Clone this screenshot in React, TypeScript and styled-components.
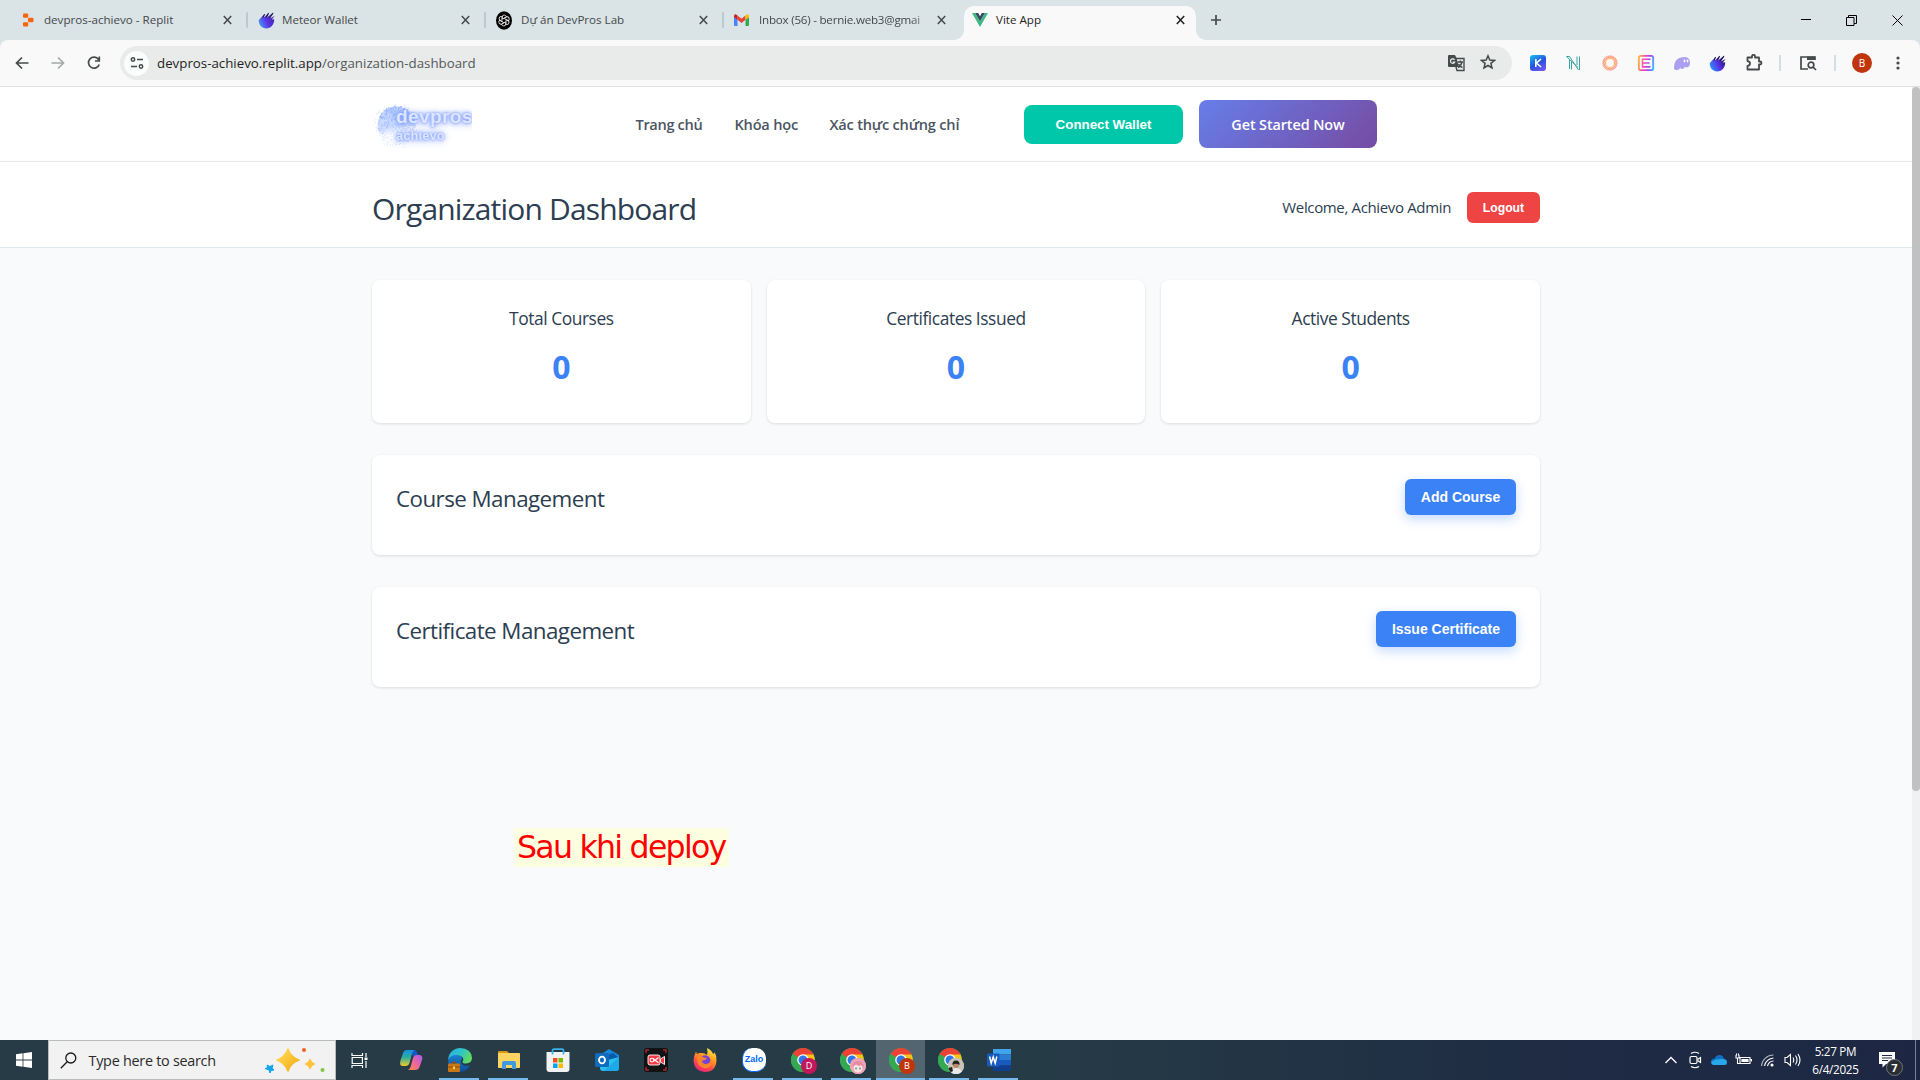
import React from 'react';
import styled, { createGlobalStyle, css } from 'styled-components';

const ui = `'Open Sans', 'Noto Sans', sans-serif`;
const arial = `'Liberation Sans', Arial, sans-serif`;

const Global = createGlobalStyle`
  * { box-sizing: border-box; }
  body { margin: 0; background: #f8fafc; font-family: ${ui}; overflow: hidden; }
  h1, h2, h3, p { margin: 0; font-weight: 400; }
  button { border: 0; padding: 0; font-family: inherit; }
  svg { display: block; flex: none; }
`;

const Screen = styled.div`
  width: 1920px;
  height: 1080px;
  display: flex;
  flex-direction: column;
  overflow: hidden;
`;

/* ---------- browser chrome ---------- */

const TabStrip = styled.div`
  height: 40px;
  flex: none;
  background: #dae3e6;
  display: flex;
  align-items: flex-start;
  padding-left: 10px;
`;

const Tab = styled.div<{ $active?: boolean; $w: number; $end?: number }>`
  position: relative;
  width: ${(p) => p.$w}px;
  height: ${(p) => (p.$active ? 34 : 28)}px;
  margin-top: 6px;
  display: flex;
  align-items: center;
  padding: ${(p) => (p.$active ? '0 11px 6px 8px' : `0 ${p.$end ?? 14}px 0 10px`)};
  color: ${(p) => (p.$active ? '#1f1f1f' : '#45494b')};
  background: ${(p) => (p.$active ? '#f9f9f9' : 'transparent')};
  border-radius: 10px 10px 0 0;
  ${(p) =>
    p.$active &&
    css`
      &::before, &::after {
        content: '';
        position: absolute;
        bottom: 0;
        width: 10px;
        height: 10px;
      }
      &::before { left: -10px; background: radial-gradient(circle at 0 0, transparent 9.5px, #f9f9f9 10.2px); }
      &::after { right: -10px; background: radial-gradient(circle at 100% 0, transparent 9.5px, #f9f9f9 10.2px); }
    `}
`;

const TabTitle = styled.span<{ $ml?: number; $ls?: number; $fade?: boolean }>`
  flex: 1;
  min-width: 0;
  margin-left: ${(p) => p.$ml ?? 9}px;
  margin-right: 6px;
  font-size: 11.6px;
  line-height: 18px;
  letter-spacing: ${(p) => p.$ls ?? 0}px;
  white-space: nowrap;
  ${(p) => p.$fade && css`mask-image: linear-gradient(90deg, #000 88%, rgba(0, 0, 0, 0.25));`}
`;

const TabDivider = styled.i`
  width: 2px;
  height: 16px;
  margin-top: 12px;
  background: #b9cbce;
  border-radius: 1px;
`;

const NewTab = styled.div`
  margin: 14px 0 0 14px;
`;

const WindowButtons = styled.div`
  margin-left: auto;
  height: 40px;
  display: flex;
  align-items: center;
  gap: 35px;
  padding-right: 17px;
`;

const Toolbar = styled.div`
  height: 47px;
  flex: none;
  display: flex;
  align-items: center;
  padding: 0 0 0 14px;
  background: #f9f9f9;
  border-bottom: 1px solid #dfe1e1;
  border-radius: 8px 8px 0 0;
`;

const ToolbarBack = styled.div`
  background: #dae3e6;
`;

const NavIcons = styled.div`
  display: flex;
  gap: 20px;
  margin-right: 18px;
`;

const AddressBar = styled.div`
  width: 1392px;
  flex: none;
  height: 34px;
  border-radius: 17px;
  background: #e8ebea;
  display: flex;
  align-items: center;
  padding: 0 16px 0 4px;
`;

const SiteInfo = styled.div`
  width: 25px;
  height: 25px;
  border-radius: 50%;
  background: #fbfcfc;
  display: grid;
  place-items: center;
`;

const Url = styled.span`
  margin-left: 8px;
  font-size: 13.3px;
  line-height: 20px;
  letter-spacing: 0;
  color: #1f1f1f;
  flex: 1;
  span { color: #55595a; }
`;

const AddressIcons = styled.div`
  display: flex;
  gap: 15px;
`;

const Extensions = styled.div`
  display: flex;
  align-items: center;
  gap: 18px;
  margin-left: 17px;
`;

const ToolDivider = styled.i<{ $l: number; $r: number }>`
  width: 2px;
  height: 16px;
  margin: 0 ${(p) => p.$r}px 0 ${(p) => p.$l}px;
  background: #d0dfe2;
`;

const Avatar = styled.div`
  width: 20px;
  height: 20px;
  border-radius: 50%;
  background: #bf360c;
  color: #fff;
  font-size: 10px;
  line-height: 20px;
  text-align: center;
  margin-right: 24px;
`;

/* ---------- page ---------- */

const Viewport = styled.div`
  height: 953px;
  flex: none;
  display: flex;
`;

const Page = styled.div`
  width: 1912px;
  background: #f8fafc;
`;

const Scrollbar = styled.div`
  width: 8px;
  background: #f1f1f1;
`;

const Thumb = styled.div`
  height: 704px;
  border-radius: 4px;
  background: #c1c1c1;
`;

const SiteHeader = styled.header`
  height: 75px;
  background: #fff;
  border-bottom: 1px solid #e5e7eb;
  display: flex;
  align-items: center;
  padding-left: 372px;
`;

const Logo = styled.div`
  width: 100px;
  height: 60px;
  display: flex;
  flex-direction: column;
  position: relative;
  overflow: hidden;
  padding: 13px 0 0 24px;
  font-family: ${arial};
  font-weight: 700;
  text-shadow: 0 0 2px #7d97ff, 0 0 4px #7b96ff, 0 1px 9px #93a9ff;
  color: #dce6ff;
  svg { position: absolute; left: 0; top: 0; }
`;

const LogoName = styled.span`
  position: relative;
  font-size: 19px;
  line-height: 20px;
  letter-spacing: 0.4px;
`;

const LogoSub = styled.span`
  position: relative;
  font-size: 12.5px;
  line-height: 16px;
  margin-top: 1px;
  letter-spacing: 0.3px;
`;

const Menu = styled.nav`
  display: flex;
  gap: 32px;
  margin-left: 163.5px;
`;

const MenuLink = styled.a<{ $w: number; $ls: number }>`
  width: ${(p) => p.$w}px;
  font-size: 14.6px;
  font-weight: 600;
  line-height: 24px;
  letter-spacing: ${(p) => p.$ls}px;
  white-space: nowrap;
  color: #4b5563;
`;

const ConnectButton = styled.button`
  width: 159px;
  height: 39px;
  margin-left: 62.5px;
  border-radius: 8px;
  background: #00c7a9;
  color: #fff;
  font: 700 13.33px ${arial};
`;

const StartButton = styled.button`
  width: 178px;
  height: 48px;
  margin-left: 16px;
  border-radius: 8px;
  background: linear-gradient(135deg, #667eea 0%, #764ba2 100%);
  color: #fff;
  font-size: 14.4px;
  font-weight: 600;
  letter-spacing: -0.1px;
`;

const TitleBar = styled.section`
  height: 86px;
  background: #fff;
  border-bottom: 1px solid #e2e8f0;
  padding: 0 372px;
  display: flex;
  align-items: center;
  justify-content: space-between;
  color: #2c3e50;
`;

const Title = styled.h1`
  font-size: 30px;
  line-height: 48px;
  letter-spacing: -0.83px;
  padding-top: 8px;
`;

const Account = styled.div`
  display: flex;
  align-items: center;
  gap: 16px;
  padding-top: 6px;
  font-size: 15px;
  letter-spacing: -0.35px;
`;

const Welcome = styled.span`
  margin-top: -2px;
`;

const LogoutButton = styled.button`
  width: 73px;
  height: 31px;
  border-radius: 6px;
  background: #ef4444;
  color: #fff;
  font: 700 12.2px ${arial};
`;

const Main = styled.main`
  padding: 32px 372px 0;
  display: flex;
  flex-direction: column;
  gap: 32px;
  color: #2c3e50;
`;

const Stats = styled.div`
  display: grid;
  grid-template-columns: repeat(3, 1fr);
  gap: 16px;
`;

const cardLook = css`
  background: #fff;
  border-radius: 8px;
  box-shadow: 0 1px 3px rgba(0, 0, 0, 0.12);
`;

const StatCard = styled.div`
  ${cardLook}
  height: 143px;
  padding-top: 24px;
  text-align: center;
`;

const StatLabel = styled.h3`
  font-size: 17.4px;
  line-height: 28px;
  letter-spacing: -0.45px;
`;

const StatValue = styled.p`
  margin-top: 11px;
  font-size: 32px;
  line-height: 48px;
  font-weight: 700;
  color: #3b82f6;
`;

const Panel = styled.section`
  ${cardLook}
  height: 100px;
  padding: 24px;
  display: flex;
  align-items: flex-start;
  justify-content: space-between;
`;

const PanelTitle = styled.h2`
  font-size: 22.4px;
  line-height: 39px;
  letter-spacing: -0.57px;
`;

const PanelButton = styled.button<{ $w: number }>`
  width: ${(p) => p.$w}px;
  height: 36px;
  border-radius: 6px;
  background: #3b82f6;
  color: #fff;
  font: 700 14px ${arial};
  box-shadow: 0 4px 12px rgba(59, 130, 246, 0.3);
`;

const Note = styled.div`
  align-self: flex-start;
  margin: 109px 0 0 142px;
  width: 215px;
  height: 39px;
  background: #fdfee0;
  color: #f00;
  font: 31.6px/39px 'DejaVu Sans', Verdana, sans-serif;
  letter-spacing: -1.75px;
  padding-left: 3px;
  white-space: nowrap;
`;

/* ---------- taskbar ---------- */

const Taskbar = styled.footer`
  height: 40px;
  flex: none;
  display: flex;
  align-items: stretch;
  background: linear-gradient(90deg, #263b45 0%, #253b46 55%, #1f2c44 80%, #1d2743 100%);
`;

const Start = styled.div`
  width: 48px;
  display: grid;
  place-items: center;
`;

const Search = styled.div`
  width: 288px;
  background: #f2f2f2;
  border: 1px solid #b9bcbd;
  display: flex;
  align-items: center;
  padding: 0 9px 0 11px;
  color: #2b2b2b;
  font-size: 14.4px;
`;

const SearchText = styled.span`
  flex: 1;
  margin-left: 11.5px;
  letter-spacing: -0.27px;
`;

const TaskItem = styled.div<{ $w?: number; $active?: boolean; $open?: boolean }>`
  width: ${(p) => p.$w ?? 49}px;
  display: grid;
  place-items: center;
  position: relative;
  background: ${(p) => (p.$active ? '#53656e' : 'transparent')};
  &::after {
    content: '';
    position: absolute;
    bottom: 0;
    height: 2px;
    left: ${(p) => (p.$active ? 0 : 4)}px;
    right: ${(p) => (p.$active ? 0 : 5)}px;
    background: ${(p) => (p.$open ? '#76b9ed' : 'transparent')};
  }
`;

const TaskView = styled.div`
  width: 50px;
  display: flex;
  align-items: center;
  padding-left: 15px;
`;

const ProfileBadge = styled.span<{ $c: string }>`
  position: absolute;
  left: 23px;
  top: 18px;
  width: 16px;
  height: 16px;
  border-radius: 50%;
  background: ${(p) => p.$c};
  color: #fff;
  font-size: 9px;
  line-height: 16px;
  text-align: center;
  overflow: hidden;
`;

const ZaloMark = styled.span`
  width: 24px;
  height: 24px;
  border-radius: 10px;
  background: #fff;
  border: 1px solid #0068ff;
  border-width: 0 0 1px 1px;
  color: #0068ff;
  font: 700 9px/23px ${arial};
  text-align: center;
`;

const Tray = styled.div`
  margin-left: auto;
  display: flex;
  align-items: center;
  gap: 8px;
  color: #fff;
`;

const Clock = styled.div`
  width: 58px;
  margin-left: -2.5px;
  text-align: center;
  font-size: 11.7px;
  line-height: 18px;
  letter-spacing: -0.3px;
  white-space: nowrap;
`;

const Notifications = styled.div`
  width: 28px;
  height: 40px;
  margin-left: 6.5px;
  padding-top: 12px;
  position: relative;
`;

const Count = styled.span`
  position: absolute;
  left: 7px;
  top: 18.5px;
  width: 17px;
  height: 17px;
  border-radius: 50%;
  background: #2a2e33;
  border: 1px solid #74787d;
  font: 700 11px/15px ${ui};
  text-align: center;
`;

const ShowDesktop = styled.i`
  width: 5px;
  height: 40px;
  border-left: 1px solid #7b8494;
`;

/* ---------- icons ---------- */

const CloseX = ({ c = '#44494b' }: { c?: string }) => (
  <svg width="9" height="10" viewBox="0 0 9 10" stroke={c} strokeWidth="1.5"><path d="M.8 1l7.400 8M8.200 1L.8 9" /></svg>
);

const Replit = () => (
  <svg width="16" height="16" viewBox="0 0 16 16" fill="#f8640c">
    <rect x="3" y="1.500" width="5.200" height="4.300" rx="1" /><rect x="8" y="5.800" width="5.500" height="4.400" rx="1" /><rect x="3" y="10.200" width="5.200" height="4.300" rx="1" />
  </svg>
);

const Meteor = ({ dark }: { dark?: boolean }) => (
  <svg width="17" height="17" viewBox="0 0 17 17">
    <defs>
      <linearGradient id={dark ? 'mtD' : 'mtL'} x1="0" y1="0.7" x2="1" y2="0.2">
        <stop offset="0" stopColor={dark ? '#229bff' : '#4299f5'} /><stop offset=".45" stopColor="#5a35e8" /><stop offset="1" stopColor={dark ? '#1c0f6c' : '#3d2297'} />
      </linearGradient>
    </defs>
    <path fill={`url(#${dark ? 'mtD' : 'mtL'})`} d="M.8 8 6.800 1.800 5 6.200 11 .6 8.600 5.800 15.400.6 11.600 6.400 16.600 4 13.800 7.400 16.200 7.200C16.200 12.600 12.800 16.500 8.300 16.500 3.800 16.500.4 12.800.8 8Z" />
    <path stroke="#1c1650" strokeWidth="1.100" d="M6.600 2.300 4.800 5.800M10.600 1.200 8.300 5.600M15 1.100 11.300 6.200" />
  </svg>
);

const OpenAi = () => (
  <svg width="16" height="19" viewBox="0 0 16 19">
    <ellipse cx="8" cy="9.500" rx="8" ry="9.300" fill="#000" />
    <g fill="none" stroke="#e8e8e8" strokeWidth=".9">
      {[0, 60, 120, 180, 240, 300].map((a) => (
        <path key={a} transform={`rotate(${a} 8 9.500)`} d="M6 9.500V6.200Q6.200 4 8.300 4 10.200 4.200 10.500 6L8 7.600" />
      ))}
    </g>
  </svg>
);

const Gmail = () => (
  <svg width="15" height="12" viewBox="0 0 15 12">
    <path fill="#4285f4" d="M0 3l3.500 2.500V12H1.200Q0 12 0 11z" /><path fill="#34a853" d="M15 3l-3.500 2.500V12h2.300Q15 12 15 11z" />
    <path fill="#ea4335" d="M3.500 1.500 7.500 4.700l4-3.200v4.200l-4 3.200-4-3.200z" /><path fill="#c5221f" d="M0 2Q.2 0 2 0.400L3.500 1.500v4.200L0 3.300z" />
    <path fill="#fbbc04" d="M15 2Q14.800 0 13 .4L11.500 1.500v4.200L15 3.300z" />
  </svg>
);

const Vue = () => (
  <svg width="16" height="14" viewBox="0 0 16 14"><path fill="#41b883" d="M0 0h3.200L8 8.300 12.800 0H16L8 14z" /><path fill="#35495e" d="M3.200 0h3L8 3.200 9.800 0h3L8 8.300z" /></svg>
);

const stroke = { fill: 'none', stroke: '#454a4b', strokeWidth: 1.7 } as const;

const Chrome = () => (
  <svg width="24" height="24" viewBox="0 0 24 24">
    <circle cx="12" cy="12" r="12" fill="#34a853" />
    <path fill="#ea4335" d="M12 12 1.600 6A12 12 0 0 1 22.400 6L22.400 7H12z" />
    <path fill="#fbc116" d="M22.400 6.400A12 12 0 0 1 12 24L17 14.500 12 6.400z" />
    <path fill="#34a853" d="M1.600 6A12 12 0 0 0 12 24L16.800 15 12 12 7 14.500z" />
    <circle cx="12" cy="12" r="5.800" fill="#fff" /><circle cx="12" cy="12" r="4.500" fill="#2f78e6" />
  </svg>
);

const Portrait = ({ pink }: { pink?: boolean }) => (
  <svg width="16" height="16" viewBox="0 0 16 16">
    <rect width="16" height="16" fill={pink ? '#eea3b6' : '#c9c2b7'} />
    {pink ? (
      <><ellipse cx="8" cy="10" rx="4.500" ry="4.500" fill="#fbe3dc" /><path fill="#e58aa3" d="M2 9Q3 3 8 3t6 6L11 7 9 8 6 6.500z" /><circle cx="6" cy="10.500" r="1" fill="#4ba3b5" /><circle cx="10" cy="10.500" r="1" fill="#4ba3b5" /></>
    ) : (
      <><path fill="#e9e9ea" d="M1 16Q3 10 8 10t7 6z" /><circle cx="8" cy="7" r="3" fill="#b88867" /><path fill="#272120" d="M4.500 7Q4 2.500 8 2.500T11.500 7Q8 4.500 4.500 7zM0 10l4-1 1 4-4 2z" /></>
    )}
  </svg>
);

const GlobeDots = () => {
  const dots: React.ReactElement[] = [];
  let seed = 11;
  const rnd = () => (seed = (seed * 16807) % 2147483647) / 2147483647;
  for (let i = 0; i < 900; i++) {
    const a = rnd() * Math.PI * 2;
    const r = Math.sqrt(rnd()) * 19;
    const x = 24 + Math.cos(a) * r;
    const y = 31 + Math.sin(a) * r * 1.05;
    const fade = Math.max(0.12, 0.95 - (y - 12) / 38);
    dots.push(<rect key={i} x={x} y={y} width="1" height="1" fill={i % 3 ? '#94b4ff' : '#dbe7ff'} opacity={fade} />);
  }
  for (let i = 0; i < 60; i++) {
    const a = rnd() * Math.PI * 2;
    const r = 18 + rnd() * 5;
    dots.push(<rect key={`o${i}`} x={24 + Math.cos(a) * r} y={31 + Math.sin(a) * r} width="1" height="1" fill="#c3d1ff" opacity=".6" />);
  }
  return (
    <svg width="100" height="60">
      <defs><linearGradient id="globe" x1="0.300" y1="0" x2="0.500" y2="1"><stop offset="0" stopColor="#a6c2ff" stopOpacity=".9" /><stop offset=".55" stopColor="#bdd0ff" stopOpacity=".7" /><stop offset=".8" stopColor="#fff" stopOpacity="0" /></linearGradient></defs>
      <circle cx="24" cy="31" r="18.500" fill="url(#globe)" />{dots}
    </svg>
  );
};

const Sparkles = () => (
  <svg width="62" height="26" viewBox="0 0 62 26">
    <defs><linearGradient id="gold" x1="0" y1="0" x2="1" y2="1"><stop offset="0" stopColor="#ffe05c" /><stop offset="1" stopColor="#f3a712" /></linearGradient></defs>
    <path fill="url(#gold)" stroke="url(#gold)" strokeWidth="1.500" strokeLinejoin="round" d="M24 2Q26.500 10 35 13 26.500 16 24 24 21 16 13 13 21 10 24 2z" />
    <path fill="#fbc338" stroke="#fbc338" strokeLinejoin="round" d="M46 12Q47 16 51 17 47 18 46 22 45 18 41 17 45 16 46 12z" />
    <path fill="#10a4ee" stroke="#10a4ee" strokeLinejoin="round" d="M3 18l3 1.500L9 18 8 21l2 2-3 .5L6 26l-1-3-4-1.500 3-1z" />
    <circle cx="40" cy="3" r="2" fill="#f25b22" /><circle cx="58.500" cy="23" r="2" fill="#84c341" />
  </svg>
);

const Copilot = () => (
  <svg width="24" height="24" viewBox="0 0 24 24">
    <defs>
      <linearGradient id="cpA" x1="0" y1="0" x2="0" y2="1"><stop offset="0" stopColor="#1a8fe0" /><stop offset=".45" stopColor="#2aaea0" /><stop offset="1" stopColor="#f3c82b" /></linearGradient>
      <linearGradient id="cpB" x1="1" y1="0" x2="0" y2="1"><stop offset="0" stopColor="#a35df0" /><stop offset=".5" stopColor="#f0649d" /><stop offset="1" stopColor="#fb8b42" /></linearGradient>
    </defs>
    <path fill="#1557c5" d="M11 2h4.500Q17.500 2 18.500 5L19.500 8H14z" />
    <path fill="url(#cpA)" d="M8 2h7.500Q13.500 3 13 5.500L10.500 15Q9.500 18 6.500 18H4Q0 18 1.500 12.500L4 5Q5 2 8 2z" />
    <path fill="url(#cpB)" d="M16 22H9Q11 21 11.500 19L14 10Q15 7 18 7h2.500Q24.500 7.500 22.800 12.500L20.500 19Q19.500 22 16 22z" />
  </svg>
);

const EdgeWork = () => (
  <svg width="24" height="24" viewBox="0 0 24 24">
    <defs>
      <linearGradient id="edA" x1="0" y1="0" x2="1" y2="0.400"><stop offset="0" stopColor="#2aa9e8" /><stop offset=".6" stopColor="#30c7c3" /><stop offset="1" stopColor="#60da62" /></linearGradient>
      <linearGradient id="edB" x1="0" y1="0" x2="0" y2="1"><stop offset="0" stopColor="#1a82d2" /><stop offset="1" stopColor="#0b4c99" /></linearGradient>
    </defs>
    <path fill="url(#edB)" d="M.2 13Q1 6 8 6.500q6 0 6 4.500-2 2-1 4 2 4 9 2.500Q18.500 24 12 24 1 24 .2 13z" />
    <path fill="url(#edA)" d="M.2 12A12 12 0 0 1 12 0Q23.500.5 24 10q0 5-6 5.500-4 0-3.500-2Q16 12 15 10 13 7 8.500 7 2.500 7 .2 12z" />
    <rect x="0" y="15.500" width="12" height="8.500" rx="1" fill="#c97814" /><path fill="#8f4d08" d="M4 13.800h4v1.700H4zM0 18.500h12v1H0z" /><rect x="5" y="18.500" width="2" height="2.500" fill="#ffd34d" />
  </svg>
);

const Explorer = () => (
  <svg width="22" height="20" viewBox="0 0 22 20"><path fill="#d79a16" d="M0 2Q0 1 1 1h8l2 2v4H0z" /><rect y="3" width="22" height="15" rx=".8" fill="#fcd462" /><path fill="#3f9bdc" d="M4 19v-6q0-2 2-2h10q2 0 2 2v6h-4v-4H8v4z" /></svg>
);

const Store = () => (
  <svg width="24" height="24" viewBox="0 0 24 24"><path fill="none" stroke="#36b3ea" strokeWidth="1.700" d="M6.500 6V2.500Q6.500 1.200 8 1.200h8q1.500 0 1.500 1.300V6" /><path fill="#f1f2f3" d="M.5 4h23v17q0 3-3 3h-17q-3 0-3-3z" /><path fill="none" stroke="#36b3ea" strokeWidth="1.700" d="M6.500 4v2.500M17.500 4v2.500" /><path fill="#f25022" d="M7 10h4.500v4.500H7z" /><path fill="#7fba00" d="M12.500 10H17v4.500h-4.500z" /><path fill="#00a4ef" d="M7 15.500h4.500V20H7z" /><path fill="#ffb900" d="M12.500 15.500H17V20h-4.500z" /></svg>
);

const Outlook = () => (
  <svg width="24" height="24" viewBox="0 0 24 24"><path fill="#1687d9" d="M5 7 14 1l10 6v5H5z" /><path fill="#0d57a8" d="M10 8 18 5l6 5-6 6z" /><path fill="#29c1f0" d="M5 14l19-5v11q0 3-3 3H8q-3 0-3-3z" /><path fill="#1a9fe4" d="M24 9v11q0 3-3 3H9z" opacity=".7" /><rect y="5" width="14" height="14" rx="1.500" fill="#0f6cbd" /><ellipse cx="7" cy="12" rx="3" ry="3.400" fill="none" stroke="#fff" strokeWidth="1.800" /></svg>
);

const Recorder = () => (
  <svg width="24" height="24" viewBox="0 0 24 24"><rect width="24" height="24" rx="3" fill="#111214" /><path fill="none" stroke="#b0272d" strokeWidth="1.400" d="M2 5V2h3M19 2h3v3M22 19v3h-3M5 22H2v-3" /><rect x="4" y="7" width="12" height="10" rx="2" fill="#f03c45" stroke="#fff" strokeWidth=".9" /><path fill="#f03c45" stroke="#fff" strokeWidth=".9" d="M16.500 11 20.500 8.500v8L16.500 14z" /><path fill="none" stroke="#fff" strokeWidth="1.100" d="M14.500 9.500 10 13.200M14.500 14.800 9.500 11" /><circle cx="8" cy="12.100" r="1.900" fill="none" stroke="#fff" strokeWidth="1.100" /></svg>
);

const Firefox = () => (
  <svg width="24" height="24" viewBox="0 0 24 24">
    <defs><linearGradient id="ff" x1=".8" y1="0" x2=".3" y2="1"><stop offset="0" stopColor="#fff14a" /><stop offset=".4" stopColor="#ff9a1f" /><stop offset=".75" stopColor="#ff4253" /><stop offset="1" stopColor="#e8257a" /></linearGradient></defs>
    <path fill="url(#ff)" d="M14 0q5 2.500 6 6 2-.5 1.500-2Q24 8 23.500 13 22.500 24 12 24 1.500 23.500.5 13 .5 8 3 3.500L4 6Q6 4.500 8 5 11 4.500 14 7 15 4 14 0z" />
    <circle cx="12" cy="12.500" r="5.300" fill="#7442d8" /><path fill="#ff8a22" d="M4 8.500Q8 7 11 9.500L14 10Q12 13 9.500 12.500 8 14.500 12 16q5 0 6-4 1.500 8-6 8.500Q3 19 4 8.500z" opacity=".9" />
  </svg>
);

const Word = () => (
  <svg width="24" height="22" viewBox="0 0 24 22"><path fill="#41a5ee" d="M6 0h18v5.500H6z" /><path fill="#2b7cd3" d="M6 5.500h18V11H6z" /><path fill="#185abd" d="M6 11h18v5.500H6z" /><path fill="#103f91" d="M6 16.500h18V21q0 1-1 1H7q-1 0-1-1z" /><rect y="4.500" width="12.500" height="13" rx="1" fill="#185abd" /><path fill="none" stroke="#fff" strokeWidth="1.500" d="M2.600 7.500 4.200 14.300 6.200 8l2 6.300 1.600-6.800" /></svg>
);

export default function App() {
  return (
    <>
      <Global />
      <Screen>
        <TabStrip>
          <Tab $w={236}><Replit /><TabTitle $ml={8}>devpros-achievo - Replit</TabTitle><CloseX /></Tab>
          <TabDivider />
          <Tab $w={236}><Meteor /><TabTitle $ml={7}>Meteor Wallet</TabTitle><CloseX /></Tab>
          <TabDivider />
          <Tab $w={236}><OpenAi /><TabTitle>Dự án DevPros Lab</TabTitle><CloseX /></Tab>
          <TabDivider />
          <Tab $w={240} $end={18}><Gmail /><TabTitle $fade $ml={10} $ls={-0.22}>Inbox (56) - bernie.web3@gmai</TabTitle><CloseX /></Tab>
          <Tab $w={232} $active><Vue /><TabTitle $ml={8}>Vite App</TabTitle><CloseX c="#1f1f1f" /></Tab>
          <NewTab><svg width="12" height="12" viewBox="0 0 12 12" {...stroke}><path d="M6 1v10M1 6h10" /></svg></NewTab>
          <WindowButtons>
            <svg width="10" height="10" stroke="#000"><path d="M0 4.500h10" /></svg>
            <svg width="11" height="11" fill="none" stroke="#000"><path d="M.5 2.500h7.500v8H.5zM2.500 2.500V.5h8v8H8" /></svg>
            <svg width="11" height="11" stroke="#000"><path d="M.5.5l10 10M10.500.5l-10 10" /></svg>
          </WindowButtons>
        </TabStrip>

        <ToolbarBack>
          <Toolbar>
            <NavIcons>
              <svg width="16" height="16" viewBox="0 0 16 16" {...stroke}><path d="M14.500 8H2.500M8 2.500 2.500 8 8 13.500" /></svg>
              <svg width="16" height="16" viewBox="0 0 16 16" {...stroke} stroke="#a5a9aa"><path d="M1.500 8h12M8 2.500 13.500 8 8 13.500" /></svg>
              <svg width="16" height="16" viewBox="0 0 16 16" {...stroke}><path d="M13.200 9.500A5.500 5.500 0 1 1 12.500 4.500M13.300 1.500V6H9" /></svg>
            </NavIcons>
            <AddressBar>
              <SiteInfo>
                <svg width="14" height="14" viewBox="0 0 14 14" {...stroke} strokeWidth="1.500"><circle cx="3" cy="3.500" r="1.700" /><circle cx="11" cy="10.500" r="1.700" /><path d="M7 3.500h6M1 10.500h6" /></svg>
              </SiteInfo>
              <Url>devpros-achievo.replit.app<span>/organization-dashboard</span></Url>
              <AddressIcons>
                <svg width="17" height="18" viewBox="0 0 17 18"><path fill="#454a4b" d="M1 1h6l1.500 3L11 13H1Q0 13 0 12V2Q0 1 1 1z" /><path fill="none" stroke="#f0f2f2" strokeWidth="1.200" d="M6.500 5.800A2.200 2.200 0 1 0 6.700 8H4.800" /><path fill="none" stroke="#454a4b" strokeWidth="1.400" d="M8 4.500h8v12H9L8 13M9.500 8h5.500M12.200 6.500V8M14 8q-1 4-4 5.500M10.500 10q1 2.500 4 3.500" /></svg>
                <svg width="16" height="16" viewBox="0 0 16 16" {...stroke} strokeWidth="1.500"><path d="M8 1.800 9.800 6l4.700.4-3.600 3 1.100 4.600L8 11.500 4 14l1.100-4.600-3.600-3L6.200 6z" /></svg>
              </AddressIcons>
            </AddressBar>
            <Extensions>
              <svg width="18" height="18" viewBox="0 0 18 18"><defs><linearGradient id="kk" x1="0" y1="0" x2=".6" y2="1"><stop offset="0" stopColor="#14c2f0" /><stop offset=".6" stopColor="#2453e0" /><stop offset="1" stopColor="#6a55ee" /></linearGradient></defs><rect x="1" y="1" width="16" height="16" rx="3" fill="url(#kk)" /><path fill="none" stroke="#fff" strokeWidth="1.600" d="M6.800 5v8M12 5 7.500 9 12 13" /></svg>
              <svg width="18" height="18" viewBox="0 0 18 18" fill="none" stroke="#3aa6a4" strokeWidth="1"><path d="M1.500 2.500h3L13.500 16M1.500 2.500 13 13.500M4.500 5.500V15M6.500 7.500v8M12 2.500V11M14.500 2.500V16" /></svg>
              <svg width="18" height="18" viewBox="0 0 18 18" fill="none"><circle cx="9" cy="9" r="7.200" stroke="#ffb3a7" /><ellipse cx="9" cy="9" rx="7" ry="5.600" stroke="#ff9a9e" transform="rotate(45 9 9)" /><ellipse cx="9" cy="9" rx="7" ry="5.600" stroke="#fba26e" transform="rotate(-45 9 9)" /><circle cx="9" cy="9" r="4.500" stroke="#ffb070" strokeWidth="1.200" /></svg>
              <svg width="18" height="18" viewBox="0 0 18 18" fill="none"><defs><linearGradient id="ee" gradientUnits="userSpaceOnUse" x1="1" y1="8" x2="17" y2="11"><stop offset="0" stopColor="#ffb52e" /><stop offset=".35" stopColor="#fa4bb0" /><stop offset=".7" stopColor="#a544f5" /><stop offset="1" stopColor="#32b7ff" /></linearGradient></defs><rect x="1.800" y="1.800" width="14.400" height="14.400" rx="2" stroke="url(#ee)" strokeWidth="1.800" /><path stroke="url(#ee)" strokeWidth="1.600" d="M13.500 5.200H5.500v7.700h8M6 9.050h6.500" /></svg>
              <svg width="18" height="18" viewBox="0 0 18 18"><path fill="#ab9ff2" d="M1 14Q1 3 12 3q5 .5 5 6 0 4-3.500 4.500-1 0-1.500-1-1 2.500-3 2.500-1.500 0-1.500-1.500Q6 16 4 16 1 16 1 14z" /><ellipse cx="11.500" cy="7" rx=".9" ry="1.400" fill="#fff" /><ellipse cx="14.500" cy="7" rx=".9" ry="1.400" fill="#fff" /></svg>
              <Meteor dark />
              <svg width="19" height="18" viewBox="-1 0 19 18" {...stroke} strokeWidth="1.800"><path strokeLinejoin="round" d="M2.500 3.500h4.500V2.300a1.500 1.500 0 0 1 3 0V3.500h4V7.500h1a1.500 1.500 0 0 1 0 3h-1V15.500H2.500V12Q5 11.500 5 9.500T2.500 7z" /></svg>
            </Extensions>
            <ToolDivider $l={16} $r={18} />
            <svg width="18" height="16" viewBox="0 0 18 16"><path {...stroke} d="M9 14H2V2h14v3" /><path fill="#454a4b" d="M8 1.500h8V5H8z" /><circle cx="12" cy="10" r="2.800" {...stroke} /><path {...stroke} d="M14 12l3 3" /></svg>
            <ToolDivider $l={17} $r={16} />
            <Avatar>B</Avatar>
            <svg width="4" height="16" fill="#454a4b"><circle cx="2" cy="3" r="1.600" /><circle cx="2" cy="8" r="1.600" /><circle cx="2" cy="13" r="1.600" /></svg>
          </Toolbar>
        </ToolbarBack>

        <Viewport>
          <Page>
            <SiteHeader>
              <Logo><GlobeDots /><LogoName>devpros</LogoName><LogoSub>achievo</LogoSub></Logo>
              <Menu>
                <MenuLink $w={67} $ls={-0.35}>Trang chủ</MenuLink>
                <MenuLink $w={63} $ls={-0.22}>Khóa học</MenuLink>
                <MenuLink $w={132} $ls={-0.22}>Xác thực chứng chỉ</MenuLink>
              </Menu>
              <ConnectButton>Connect Wallet</ConnectButton>
              <StartButton>Get Started Now</StartButton>
            </SiteHeader>
            <TitleBar>
              <Title>Organization Dashboard</Title>
              <Account><Welcome>Welcome, Achievo Admin</Welcome><LogoutButton>Logout</LogoutButton></Account>
            </TitleBar>
            <Main>
              <Stats>
                {['Total Courses', 'Certificates Issued', 'Active Students'].map((label) => (
                  <StatCard key={label}><StatLabel>{label}</StatLabel><StatValue>0</StatValue></StatCard>
                ))}
              </Stats>
              <Panel><PanelTitle>Course Management</PanelTitle><PanelButton $w={111}>Add Course</PanelButton></Panel>
              <Panel><PanelTitle>Certificate Management</PanelTitle><PanelButton $w={140}>Issue Certificate</PanelButton></Panel>
              <Note>Sau khi deploy</Note>
            </Main>
          </Page>
          <Scrollbar><Thumb /></Scrollbar>
        </Viewport>

        <Taskbar>
          <Start><svg width="16" height="16" viewBox="0 0 16 16" fill="#fff"><path d="M0 2.200 6.600 1.300V7.600H0zM7.400 1.200 16 0v7.600H7.400zM0 8.400h6.600v6.300L0 13.800zM7.400 8.400H16V16l-8.600-1.200z" /></svg></Start>
          <Search>
            <svg width="17" height="17" viewBox="0 0 17 17" fill="none" stroke="#1a1a1a" strokeWidth="1.300"><circle cx="10.800" cy="6" r="5" /><path d="M7.200 9.700.8 16.200" /></svg>
            <SearchText>Type here to search</SearchText>
            <Sparkles />
          </Search>
          <TaskView><svg width="17" height="17" viewBox="0 0 17 17" fill="none" stroke="#fff" strokeWidth="1.200"><path d="M1 1v2.500h10.500V1M1 16v-2.500h10.500V16M1.200 5.500h10.200v6H1.200zM15 1v4M15 9v7" /><path strokeWidth="3" d="M15 5.500v2.500" /></svg></TaskView>
          <TaskItem><Copilot /></TaskItem>
          <TaskItem $open><EdgeWork /></TaskItem>
          <TaskItem $open><Explorer /></TaskItem>
          <TaskItem><Store /></TaskItem>
          <TaskItem><Outlook /></TaskItem>
          <TaskItem><Recorder /></TaskItem>
          <TaskItem><Firefox /></TaskItem>
          <TaskItem $open><ZaloMark>Zalo</ZaloMark></TaskItem>
          <TaskItem $open><Chrome /><ProfileBadge $c="#c2185b">D</ProfileBadge></TaskItem>
          <TaskItem $open><Chrome /><ProfileBadge $c="#eea3b6"><Portrait pink /></ProfileBadge></TaskItem>
          <TaskItem $open $active><Chrome /><ProfileBadge $c="#bf360c">B</ProfileBadge></TaskItem>
          <TaskItem $open><Chrome /><ProfileBadge $c="#c9c2b7"><Portrait /></ProfileBadge></TaskItem>
          <TaskItem $open><Word /></TaskItem>
          <Tray>
            <svg width="16" height="16" viewBox="0 0 16 16" fill="none" stroke="#fff" strokeWidth="1.300"><path d="M2.500 11 8 5.500l5.500 5.500" /></svg>
            <svg width="16" height="18" viewBox="0 0 16 18" fill="none" stroke="#fff" strokeWidth="1.200"><rect x="3" y="5.500" width="7" height="7" rx="1.500" /><path d="M10.500 8.500l3-2v5l-3-2M4 2.500Q8 0 12 2.500M4 15.500Q8 18 12 15.500" /></svg>
            <svg width="16" height="16" viewBox="0 0 16 16"><path fill="#0f6fc6" d="M0 10q0-3.500 3.500-3.500Q5 3 8.500 3t4.500 4q3 0 3 3z" /><path fill="#28a8ea" d="M2 13Q0 12 0 10l5-2.500 6-.5q5 0 5 3.500Q16 13 13.500 13z" /></svg>
            <svg width="17" height="16" viewBox="0 0 17 16" fill="none" stroke="#fff" strokeWidth="1.100"><path d="M5 5.500h10v6H5zM15.500 7.500h1v2M1 3v3h3V3M1.500 1.500v2M3.500 1.500v2M2.500 6v5.500H5" /><path fill="#fff" d="M7 7.500h6v2H7z" /></svg>
            <svg width="16" height="16" viewBox="0 0 16 16" fill="none" stroke="#fff" strokeWidth="1.100"><path d="M1.500 14A12 12 0 0 1 13.500 3" stroke="#aab1bd" /><path d="M4.500 14A9.500 9.500 0 0 1 13.500 6M7.500 14A6.500 6.500 0 0 1 13.500 9" /><circle cx="12" cy="13" r="1" fill="#fff" /></svg>
            <svg width="17" height="16" viewBox="0 0 17 16" fill="none" stroke="#fff" strokeWidth="1.100"><path d="M1 5.500h2L6.500 2.500v11L3 10.500H1zM9 5.500q1.500 2.500 0 5M11.500 3.500q3 4.500 0 9M14 2q4 6 0 12" /></svg>
            <Clock>5:27 PM<br />6/4/2025</Clock>
            <Notifications><svg width="17" height="16" viewBox="0 0 17 16"><path fill="#fff" d="M0 0h16v12H7l-3.500 3.500V12H0z" /><path stroke="#1f2b43" d="M3 3.500h10M3 6h10M3 8.500h6" /></svg><Count>7</Count></Notifications>
            <ShowDesktop />
          </Tray>
        </Taskbar>
      </Screen>
    </>
  );
}
